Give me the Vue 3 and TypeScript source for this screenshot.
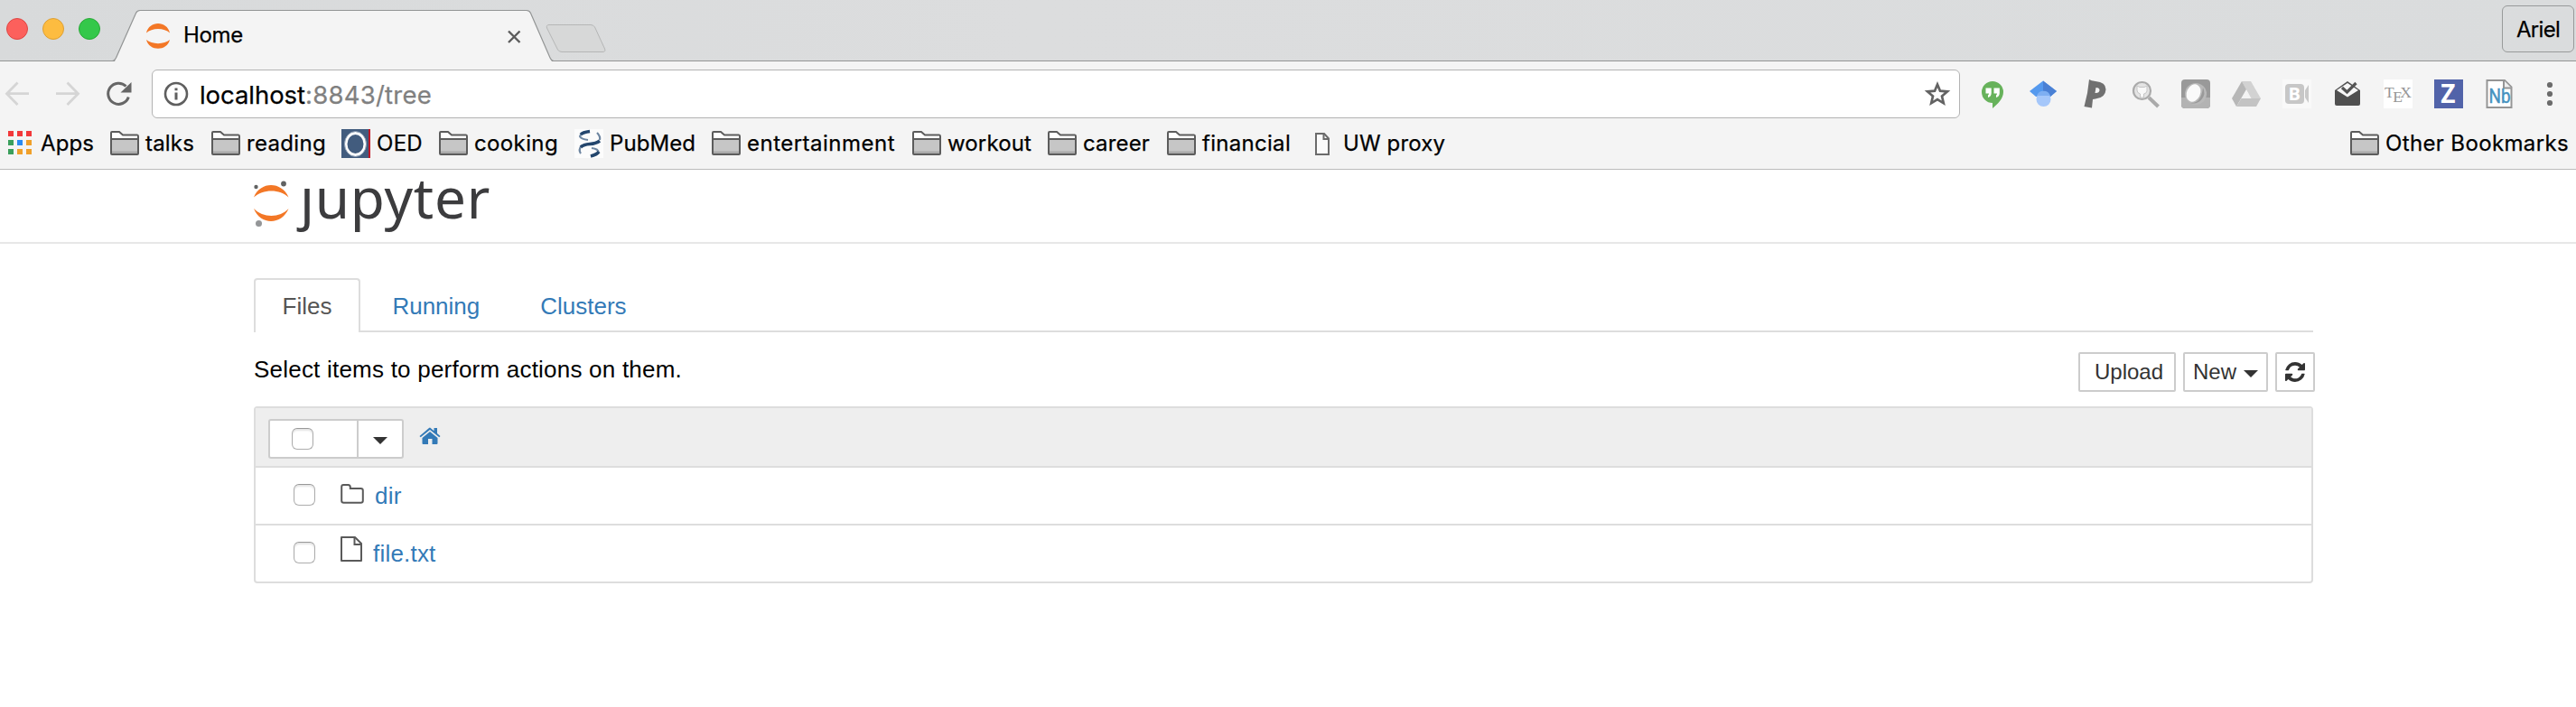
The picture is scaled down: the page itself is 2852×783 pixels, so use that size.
<script setup lang="ts">
interface Bookmark {
  label: string
  icon: 'folder' | 'oed' | 'pubmed' | 'page'
  slot: number
  text: number
}

const bookmarks: Bookmark[] = [
  { label: 'talks', icon: 'folder', slot: 112, text: 54 },
  { label: 'reading', icon: 'folder', slot: 144, text: 88 },
  { label: 'OED', icon: 'oed', slot: 108, text: 51 },
  { label: 'cooking', icon: 'folder', slot: 150, text: 93 },
  { label: 'PubMed', icon: 'pubmed', slot: 152, text: 95 },
  { label: 'entertainment', icon: 'folder', slot: 222, text: 164 },
  { label: 'workout', icon: 'folder', slot: 150, text: 93 },
  { label: 'career', icon: 'folder', slot: 132, text: 74 },
  { label: 'financial', icon: 'folder', slot: 156, text: 98 },
  { label: 'UW proxy', icon: 'page', slot: 170, text: 113 },
]

const appColors = ['#f2383a', '#f2383a', '#f2383a', '#3a9f5c', '#2a8bf2', '#f0a02a', '#3a9f5c', '#f0a02a', '#f0a02a']

const tabs = [
  { label: 'Files', active: true },
  { label: 'Running', active: false },
  { label: 'Clusters', active: false },
]

const files = [
  { name: 'dir', kind: 'folder' },
  { name: 'file.txt', kind: 'file' },
]

// Spreads a label's letters so that its run takes the given width.
const vFit = {
  mounted(el: HTMLElement, binding: { value: number }) {
    const natural = el.getBoundingClientRect().width
    const count = (el.textContent ?? '').length
    el.style.letterSpacing = `${(binding.value - natural) / count}px`
  },
}
</script>

<template>
  <div class="window">
    <header class="titlebar">
      <svg class="frame" width="700" height="68" viewBox="0 0 700 68">
        <g stroke-width="1">
          <circle cx="19" cy="32" r="11.5" fill="#fc605c" stroke="#de4643" />
          <circle cx="59" cy="32" r="11.5" fill="#fdbc40" stroke="#dd9f33" />
          <circle cx="99" cy="32" r="11.5" fill="#34c84a" stroke="#27a935" />
        </g>
        <path d="M127 68L150.500 15Q152 12 155 12H583Q586 12 587.500 15L611 68Z" fill="#f4f4f4" />
        <path d="M0 67.500H124Q127 67.500 128.500 64L150.500 14.500Q152 11.500 155 11.500H583Q586 11.500 587.500 14.500L609 64Q610.500 67.500 613 67.500H700" fill="none" stroke="#939595" stroke-width="1.200" />
        <path d="M608 27.500H654Q657 27.500 658.500 30L669.500 54Q671 57.500 667 57.500H622Q619 57.500 617.500 55L605.500 31Q604.500 27.500 608 27.500Z" fill="#d7d8d8" stroke="#b5b6b6" />
        <path d="M563 34.500L575.500 47M575.500 34.500L563 47" stroke="#5c5c5c" stroke-width="2.400" fill="none" />
        <g fill="#f37726">
          <path d="M162 36.500C165 22.500 185 22.500 188 36.500C182 30.500 168 30.500 162 36.500Z" />
          <path d="M162 44C165 57 185 57 188 44C182 49.500 168 49.500 162 44Z" />
        </g>
      </svg>
      <div class="tab-title"><span v-fit="66">Home</span></div>
      <div class="profile"><span v-fit="48">Ariel</span></div>
    </header>

    <div class="toolbar">
      <svg class="nav" width="168" height="72" viewBox="0 68 168 72">
        <g fill="none" stroke="#d5d5d5" stroke-width="2.800">
          <path d="M32 103.700H8M19.500 91.500L7.500 103.700L19.500 116" />
          <path d="M62 103.700H86M74.500 91.500L86.500 103.700L74.500 116" />
        </g>
        <path d="M142.300 107.500A11.600 11.600 0 1 1 139.500 95.500" fill="none" stroke="#666" stroke-width="3" />
        <path d="M145.500 91V102.500H133.500Z" fill="#666" />
      </svg>
      <div class="omnibox">
        <svg width="28" height="28" viewBox="0 0 28 28">
          <circle cx="14" cy="14" r="12" fill="none" stroke="#5f5f5f" stroke-width="2.600" />
          <path d="M12.500 12.500H15.500V20.500H12.500ZM12.500 7.500H15.500V10.300H12.500Z" fill="#5f5f5f" />
        </svg>
        <div class="url"><span v-fit="117">localhost</span><span v-fit="140" class="path">:8843/tree</span></div>
        <svg class="star" width="30" height="30" viewBox="0 0 30 30">
          <path d="M15 4.500L18 11.700L26 12.400L20 17.600L21.800 25.300L15 21.200L8.200 25.300L10 17.600L4 12.400L12 11.700Z" fill="none" stroke="#636363" stroke-width="2.700" />
        </svg>
      </div>
      <div class="extensions">
        <svg viewBox="0 0 32 32">
          <path d="M15 2A12 12 0 0 1 27 14C27 21 21 27 15 32V26A12 12 0 0 1 15 2Z" fill="#67b25b" />
          <path d="M7.500 9.500H13.700V15Q13.700 19 10 20V17.500Q11 17 11 15.500H7.500ZM16.500 9.500H22.800V15Q22.800 19 19 20V17.500Q20 17 20 15.500H16.500Z" fill="#fff" />
        </svg>
        <svg viewBox="0 0 32 32">
          <path d="M15 1.500L0 13L7 19H23L30 13Z" fill="#5599ee" />
          <path d="M15 1.500L30 13L23 19L15 13Z" fill="#4a80d4" />
          <circle cx="15.500" cy="22" r="8" fill="#a5c7fa" />
          <path d="M8 18A8 8 0 0 1 23 18Z" fill="#7eaff2" />
        </svg>
        <svg viewBox="0 0 32 32">
          <path fill-rule="evenodd" d="M10 0Q12 1.500 17 2Q28.500 3 28.500 11Q28 20.500 17 21.500L14 22L13 31.500L4.500 30L8 15ZM17.500 9L16.500 15Q21 15.500 21.500 12Q21.500 9 17.500 9Z" fill="#707070" />
        </svg>
        <svg viewBox="0 0 32 32">
          <path d="M20 20L30.500 30" stroke="#aaa" stroke-width="4" />
          <circle cx="12.500" cy="12.500" r="9.500" fill="#e4e4e4" stroke="#aaa" stroke-width="2.200" />
          <path d="M7 7L10 8.500H15L18 7V13Q17 16 14.500 16V20H10.500V16Q7 15 7 12Z" fill="#f8f8f8" stroke="#c4c4c4" />
        </svg>
        <svg viewBox="0 0 32 32">
          <rect width="32" height="32" rx="4" fill="#999" />
          <path d="M0 20H32V28Q32 32 28 32H4Q0 32 0 28Z" fill="#b3b3b3" />
          <circle cx="16" cy="16" r="12" fill="#b9b9b9" />
          <path d="M24 9A12 12 0 0 1 10 26Q22 27 24 9Z" fill="#999" />
          <ellipse cx="13.500" cy="15" rx="7.500" ry="10" transform="rotate(25 13.500 15)" fill="#fafafa" />
        </svg>
        <svg viewBox="0 0 32 32">
          <path d="M11 2H21L32 21H21.500Z" fill="#d2d2d2" />
          <path d="M11 2L0 21L5 30L16 11Z" fill="#b7b7b7" />
          <path d="M10.500 21H32L27 30H5Z" fill="#c3c3c3" />
          <path d="M16 12L21 21H11Z" fill="#f4f4f4" />
        </svg>
        <svg viewBox="0 0 32 32">
          <rect width="32" height="32" fill="#f9f9f9" />
          <rect x="3" y="5" width="21" height="22" rx="4" fill="#c7c7c7" />
          <path d="M25 12L29 6V26L25 20Z" fill="#c9c9c9" />
          <text x="6.500" y="23" class="sans" font-size="20" font-weight="700" fill="#fff">B</text>
        </svg>
        <svg viewBox="0 0 32 32">
          <path d="M2 12L16 2L30 12V27Q30 29 28 29H4Q2 29 2 27Z" fill="#505050" />
          <path d="M4 12L16 4L28 12L16 19.500Z" fill="#f7f7f7" />
          <path d="M10 9L15.500 14L25.500 4" fill="none" stroke="#555" stroke-width="3.200" />
        </svg>
        <svg viewBox="0 0 32 32">
          <rect width="32" height="32" fill="#fff" />
          <g class="serif" font-size="17.500" fill="#969696"><text x="1" y="20">T</text><text x="10.300" y="24.500">E</text><text x="18.300" y="20">X</text></g>
        </svg>
        <svg viewBox="0 0 32 32">
          <rect width="32" height="32" fill="#5163a9" />
          <text x="7.200" y="26" class="sans" font-size="28" font-weight="700" fill="#fff">Z</text>
        </svg>
        <svg viewBox="0 0 32 32">
          <path d="M2.500 1H22L29.500 8.500V31H2.500Z" fill="#fff" stroke="#959595" stroke-width="2" />
          <path d="M21 1V9.500H29.500" fill="#eee" stroke="#959595" stroke-width="2" />
          <text x="4.500" y="26" class="roboto" font-size="22" textLength="24" lengthAdjust="spacingAndGlyphs" fill="#4692bf" stroke="#4692bf" stroke-width=".5">Nb</text>
        </svg>
      </div>
      <svg class="menu" width="12" height="32" viewBox="0 0 12 32" fill="#6b6b6b">
        <circle cx="6" cy="6" r="3.100" /><circle cx="6" cy="16" r="3.100" /><circle cx="6" cy="26" r="3.100" />
      </svg>
    </div>

    <nav class="bookmarks">
      <div class="apps">
        <div class="app-grid"><i v-for="(c, i) in appColors" :key="i" :style="{ background: c }"></i></div>
        <span v-fit="59">Apps</span>
      </div>
      <div v-for="b in bookmarks" :key="b.label" class="bookmark" :style="{ width: b.slot + 'px' }">
        <svg v-if="b.icon === 'folder'" viewBox="0 0 32 32">
          <path d="M1 27V4Q1 3 2 3H10L14 6.500H30Q31 6.500 31 8V27Q31 28 30 28H2Q1 28 1 27Z" fill="#fff" />
          <path d="M1 11H31V28H1Z" fill="#c6c6c6" /><path d="M1 24.500H31V28H1Z" fill="#aaa" />
          <path d="M1 27V4Q1 3 2 3H10L14 6.500H30Q31 6.500 31 8V27Q31 28 30 28H2Q1 28 1 27ZM1 11H31" fill="none" stroke="#5c5c5c" stroke-width="2" />
        </svg>
        <svg v-else-if="b.icon === 'oed'" viewBox="0 0 32 32">
          <path d="M0 0H32V32H0Z" fill="#425c7e" /><path d="M30 0H32V32H30Z" fill="#c01826" />
          <ellipse cx="15.500" cy="16.500" rx="10.500" ry="12" fill="none" stroke="#fff" stroke-width="3" />
          <ellipse cx="15.500" cy="16.500" rx="12" ry="14" fill="none" stroke="#8fa0b6" stroke-width="1" />
        </svg>
        <svg v-else-if="b.icon === 'pubmed'" viewBox="0 0 32 32">
          <path d="M0 0H32V32H0Z" fill="#fcfcfc" />
          <path d="M17 2.500Q7 4 6 8Q7 11 15 12M25 4Q29 8 28 12M8 18Q4 23 7 27M19 21Q27 22 26.500 26Q25 29 18 30" fill="none" stroke="#6e86a1" stroke-width="2.200" />
          <path d="M17 2.500Q9 3.500 7 6M28 13Q24 16 17 16.500Q10 17 7 20M27 25Q25 28 18 30" fill="none" stroke="#24466d" stroke-width="3.600" />
        </svg>
        <svg v-else viewBox="0 0 32 32">
          <path d="M9 5H18L23 10.500V28H9Z" fill="#fbfbfb" stroke="#6b6b6b" stroke-width="2" /><path d="M17.500 5V11H23" fill="none" stroke="#6b6b6b" stroke-width="2" />
        </svg>
        <span v-fit="b.text">{{ b.label }}</span>
      </div>
      <div class="bookmark other">
        <svg viewBox="0 0 32 32">
          <path d="M1 27V4Q1 3 2 3H10L14 6.500H30Q31 6.500 31 8V27Q31 28 30 28H2Q1 28 1 27Z" fill="#fff" />
          <path d="M1 11H31V28H1Z" fill="#c6c6c6" /><path d="M1 24.500H31V28H1Z" fill="#aaa" />
          <path d="M1 27V4Q1 3 2 3H10L14 6.500H30Q31 6.500 31 8V27Q31 28 30 28H2Q1 28 1 27ZM1 11H31" fill="none" stroke="#5c5c5c" stroke-width="2" />
        </svg>
        <span v-fit="203">Other Bookmarks</span>
      </div>
    </nav>

    <div class="brand">
      <svg width="40" height="54" viewBox="0 0 40 54">
        <g fill="#f37726">
          <path d="M0 18.500C7 .5 31 .5 38.500 18.500C29 9 10 9 0 18.500Z" />
          <path d="M0 31C7 49.500 31 49.500 38.500 31C29 41.500 10 41.500 0 31Z" />
        </g>
        <circle cx="2.500" cy="7" r="2.200" fill="#616262" /><circle cx="33" cy="3.500" r="2.900" fill="#616262" /><circle cx="5.500" cy="47.500" r="3.500" fill="#949698" />
      </svg>
      <div class="wordmark"><span v-fit="211"><span class="j">j</span>upyter</span></div>
    </div>

    <main class="content">
      <ul class="tabs">
        <li v-for="t in tabs" :key="t.label" :class="{ active: t.active }"><a>{{ t.label }}</a></li>
      </ul>
      <div class="actions">
        <p><span v-fit="474">Select items to perform actions on them.</span></p>
        <div class="buttons">
          <button class="upload">Upload</button>
          <button class="new">New<b class="caret"></b></button>
          <button class="refresh">
            <svg width="22" height="22" viewBox="0 0 1536 1536" fill="#333">
              <path d="M1511 928q0 5-1 7-64 268-268 434.500T764 1536q-146 0-282.500-55T238 1324l-129 129q-19 19-45 19t-45-19-19-45V960q0-26 19-45t45-19h448q26 0 45 19t19 45-19 45l-137 137q71 66 161 102t187 36q134 0 250-65t186-179q11-17 53-117 8-23 30-23h192q13 0 22.500 9.500t9.500 22.500zM1536 128v448q0 26-19 45t-45 19h-448q-26 0-45-19t-19-45 19-45l138-138Q969 256 768 256q-134 0-250 65T332 500q-11 17-53 117-8 23-30 23H50q-13 0-22.500-9.500T18 608v-7q65-268 270-434.500T768 0q146 0 284 55.500T1297 212l130-129q19-19 45-19t45 19 19 45z" />
            </svg>
          </button>
        </div>
      </div>
      <section class="list">
        <div class="list-head">
          <div class="selector"><div><i class="check"></i></div><div class="drop"><b class="caret"></b></div></div>
          <svg class="home" width="24" height="20" viewBox="0 0 24 20" fill="#337ab7">
            <path d="M12 5L20.500 12V18Q20.500 19 19.500 19H14.500V13H10V19H4.500Q3.500 19 3.500 18V12Z" />
            <path d="M12 .5L16.500 4.200V1H20V7L23.500 10L22.300 11.300L12 2.900L1.700 11.300L.5 10L11 1Q12 .2 13 1Z" />
          </svg>
        </div>
        <div v-for="f in files" :key="f.name" class="row">
          <i class="check"></i>
          <svg v-if="f.kind === 'folder'" class="folder" width="26" height="28" viewBox="0 0 26 28">
            <path d="M1.200 6Q1.200 4 3.200 4H8.500Q10.800 4 10.800 6.500V8H22.500Q24.800 8 24.800 10.200V21.500Q24.800 23.800 22.500 23.800H3.500Q1.200 23.800 1.200 21.500Z" fill="none" stroke="#5a5a5a" stroke-width="2" />
          </svg>
          <svg v-else class="file" width="24" height="28" viewBox="0 0 24 28">
            <path d="M1 1H16L23 8V27H1Z" fill="none" stroke="#5a5a5a" stroke-width="2" stroke-linejoin="round" /><path d="M15.500 1V9H23" fill="none" stroke="#5a5a5a" stroke-width="2" />
          </svg>
          <a>{{ f.name }}</a>
        </div>
      </section>
    </main>
  </div>
</template>

<style>
body { background: #fff; }
</style>

<style scoped>
.window, .window * { box-sizing: border-box; }
.window { width: 2852px; height: 783px; overflow: hidden; background: #fff; font-family: "Liberation Sans", Arial, sans-serif; font-size: 26px; color: #000; }
svg { display: block; flex: none; }
span { white-space: pre; }
.sans { font-family: "Open Sans", sans-serif; }
.serif { font-family: "Liberation Serif", serif; }
.roboto { font-family: Roboto, sans-serif; }

.titlebar { position: relative; height: 68px; background: linear-gradient(90deg, #d8dadb, #dcddde 40%, #dadcdd); border-bottom: 1px solid #939595; display: flex; justify-content: space-between; font: 24px/30px Inter, sans-serif; -webkit-text-stroke: .25px; }
.frame { position: absolute; left: 0; top: 0; }
.tab-title { position: relative; margin: 24px 0 0 203px; }
.profile { width: 80px; height: 52px; margin: 6px 2px 0 0; border: 1px solid #989a9a; border-radius: 6px; padding: 11px 0 0 15px; }

.toolbar { height: 72px; background: #f4f4f4; display: flex; align-items: center; }
.omnibox { width: 2002px; height: 54px; border: 1px solid #b3b3b3; border-radius: 6px; background: #fff; display: flex; align-items: center; padding: 0 9px 0 12px; font: 27.5px/34px Inter, sans-serif; -webkit-text-stroke: .25px; }
.url { flex: 1; margin: 2px 0 0 12px; }
.path { color: #808080; }
.extensions { display: flex; gap: 24px; margin-left: 21px; }
.extensions svg { width: 32px; height: 32px; overflow: visible; }
.menu { margin-left: 34px; }

.bookmarks { height: 48px; background: #f4f4f4; border-bottom: 1px solid #bcbcbc; display: flex; align-items: flex-start; font: 24px/30px Inter, sans-serif; -webkit-text-stroke: .25px; padding: 3px 8px 0 9px; }
.apps { display: flex; width: 113px; }
.app-grid { display: grid; grid-template-columns: repeat(3, 6px); grid-auto-rows: 6px; gap: 4px; margin: 2px 10px 0 0; }
.bookmark { display: flex; gap: 7px; flex: none; }
.bookmark svg { width: 32px; height: 32px; }
.bookmark span, .apps span { margin-top: 1px; flex: none; }
.other { margin-left: auto; }

.brand { height: 82px; border-bottom: 2px solid #e7e7e7; padding: 12px 0 0 281px; display: flex; }
.wordmark { margin: -24px 0 0 11px; font: 62px/84px "Noto Sans", sans-serif; color: #3c3c3e; }
.j { display: inline-block; clip-path: inset(31px -20px -10px -20px); }

.content { width: 2282px; margin-left: 281px; }
.tabs { list-style: none; margin: 38px 2px 0 0; padding: 0; height: 60px; border-bottom: 2px solid #ddd; display: flex; gap: 4px; }
.tabs li { height: 60px; padding: 11px 29.5px 0; line-height: 36px; border: 2px solid transparent; border-bottom: 0; border-radius: 4px 4px 0 0; color: #337ab7; }
.tabs .active { border-color: #ddd; color: #555; background: #fff; }
.actions { height: 82px; display: flex; justify-content: space-between; padding-top: 22px; }
.actions p { margin: 0; line-height: 38px; }
.buttons { display: flex; gap: 8px; }
.buttons button { height: 44px; border: 2px solid #ccc; border-radius: 2px; background: #fff; color: #333; font: 24px/36px "Liberation Sans", Arial, sans-serif; padding: 0; display: flex; align-items: center; justify-content: center; }
.buttons .upload { width: 108px; padding-left: 4px; }
.buttons .new { width: 94px; gap: 8px; }
.buttons .refresh { width: 44px; }
.caret { display: block; width: 0; height: 0; border: 8px solid transparent; border-top-color: #333; border-bottom: 0; }
.new .caret { margin-top: 4px; }

.list { width: 2280px; border: 2px solid #ddd; border-radius: 4px; }
.list-head { height: 64px; background: #eee; display: flex; padding: 12px 0 0 14px; }
.selector { display: flex; width: 150px; height: 44px; border: 2px solid #ccc; border-radius: 3px; background: #fff; }
.selector > div { width: 98px; padding: 8px 0 0 24px; border-right: 2px solid #ccc; }
.selector > .drop { width: 48px; border: 0; padding: 18px 0 0 16px; }
.check { display: block; width: 24px; height: 24px; flex: none; border: 1px solid #adadad; border-top-color: #989898; border-radius: 6px; background: #fff; box-shadow: inset 0 2px 2px #e4e4e4; }
.home { margin: 9px 0 0 17px; }
.row { height: 64px; border-top: 2px solid #ddd; display: flex; padding-left: 42px; }
.row .check { margin: 18px 28px 0 0; }
.row a { color: #337ab7; line-height: 36px; margin: 13px 0 0 12px; letter-spacing: .2px; }
.folder { margin-top: 15px; }
.file { margin-top: 12px; }
</style>
